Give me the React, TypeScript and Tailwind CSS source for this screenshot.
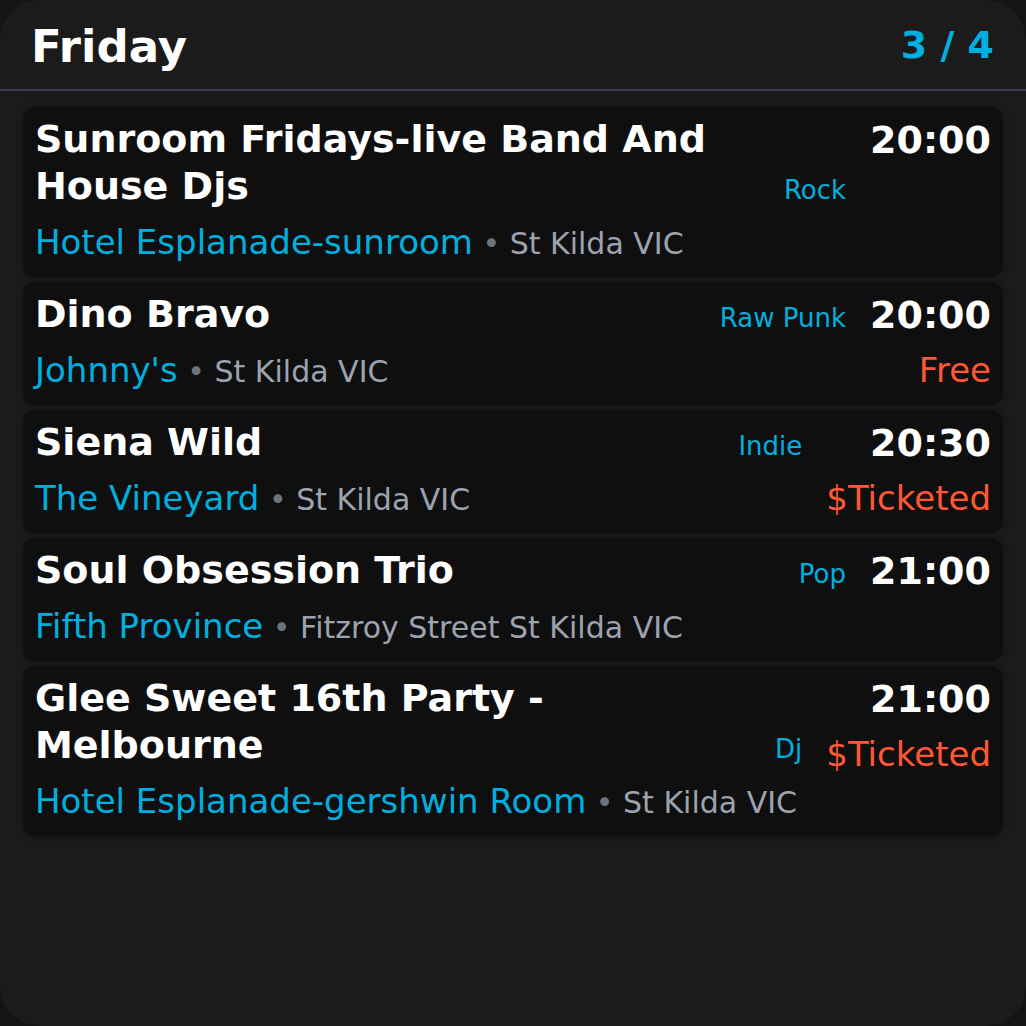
import React from "react";

type Ev = {
  title: string;
  venue: string;
  loc: string;
  genre: string;
  time: string;
  price?: string;
};

const events: Ev[] = [
  { title: "Sunroom Fridays-live Band And House Djs", venue: "Hotel Esplanade-sunroom", loc: "St Kilda VIC", genre: "Rock", time: "20:00" },
  { title: "Dino Bravo", venue: "Johnny's", loc: "St Kilda VIC", genre: "Raw Punk", time: "20:00", price: "Free" },
  { title: "Siena Wild", venue: "The Vineyard", loc: "St Kilda VIC", genre: "Indie", time: "20:30", price: "$Ticketed" },
  { title: "Soul Obsession Trio", venue: "Fifth Province", loc: "Fitzroy Street St Kilda VIC", genre: "Pop", time: "21:00" },
  { title: "Glee Sweet 16th Party - Melbourne", venue: "Hotel Esplanade-gershwin Room", loc: "St Kilda VIC", genre: "Dj", time: "21:00", price: "$Ticketed" },
];

function Card({ e }: { e: Ev }) {
  return (
    <div className="flex gap-6 rounded-[12px] bg-[#0f0f0f] px-3 pt-[9px] pb-[13px] shadow-[0_1px_6px_rgba(0,0,0,0.3)]">
      <div className="flex min-w-0 flex-1 flex-col">
        <div className="flex items-end gap-6">
          <div className="min-w-0 flex-1 text-[38px] font-bold leading-[47px] text-white">{e.title}</div>
          <div className="pb-[4px] text-[26px] leading-[32px] text-[#00afdf]">{e.genre}</div>
        </div>
        <div className="mt-[10px] whitespace-nowrap text-[34px] leading-[44px]">
          <span className="text-[#00afdf]">{e.venue}</span>
          <span className="text-[30px] leading-none">
            {" "}
            <span className="text-[#6b7280]">•</span>{" "}
            <span className="text-[#9ca3af]">{e.loc}</span>
          </span>
        </div>
      </div>
      <div className="flex flex-col items-end">
        <div className="pt-[2px] text-[38px] font-bold leading-[45px] text-white">{e.time}</div>
        {e.price && <div className="mt-[10px] text-[34px] leading-[44px] text-[#ff5733]">{e.price}</div>}
      </div>
    </div>
  );
}

export default function App() {
  return (
    <div className="h-[1026px] w-[1026px] bg-[#141414]" style={{ fontFamily: '"DejaVu Sans", sans-serif' }}>
      <div className="flex h-full w-full flex-col overflow-hidden rounded-[40px] bg-[#1b1b1b]">
        <div className="flex h-[91px] shrink-0 items-center justify-between border-b-2 border-[#383e4a] pl-[31px] pr-[32px]">
          <div className="pt-[3px] text-[45px] font-bold leading-none text-white">Friday</div>
          <div className="text-[38px] font-bold leading-none text-[#00afdf]">3 / 4</div>
        </div>
        <div className="flex flex-col gap-[5px] px-[23px] pt-[16px]">
          {events.map((e, i) => (
            <Card key={i} e={e} />
          ))}
        </div>
      </div>
    </div>
  );
}
